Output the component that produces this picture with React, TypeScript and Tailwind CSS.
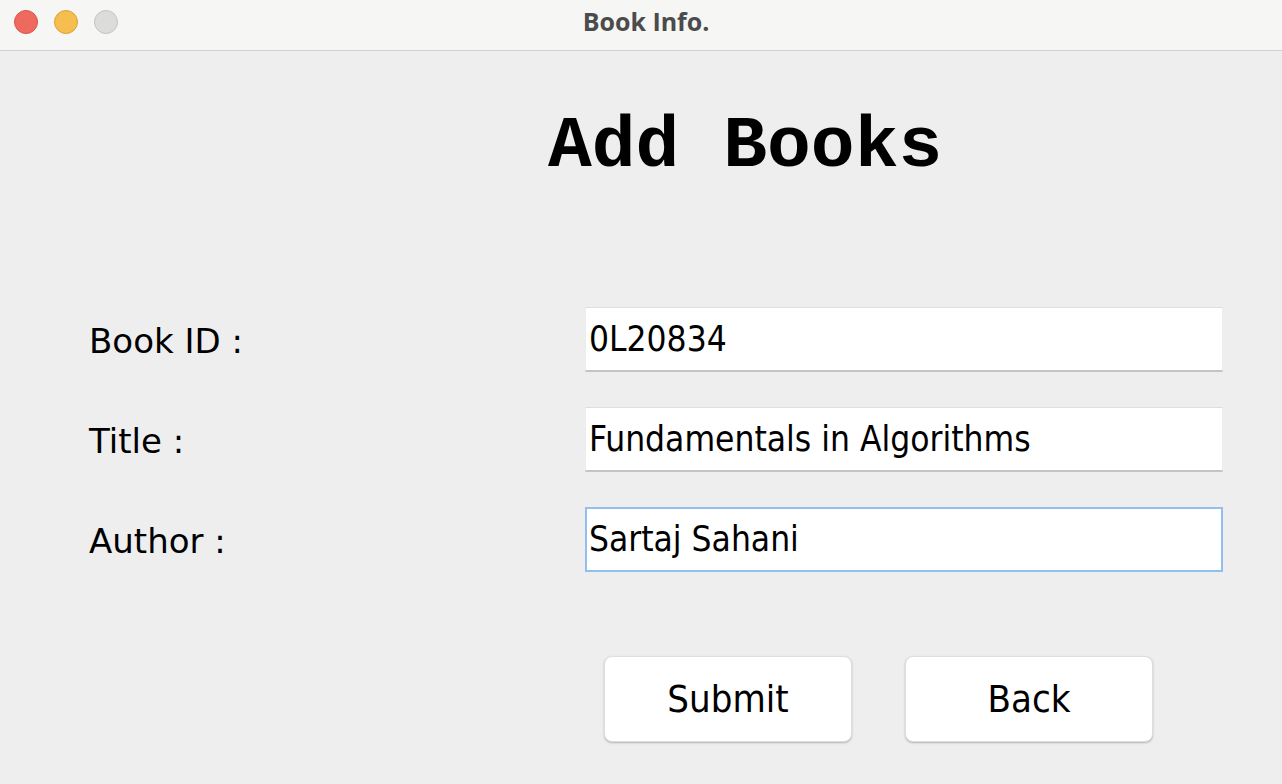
import React from 'react';

const fieldFont = { fontFamily: '"DejaVu Sans Condensed", "DejaVu Sans", Tahoma, sans-serif' };
const labelFont = { fontFamily: '"DejaVu Sans", Verdana, sans-serif' };

function TrafficLights() {
  return (
    <div className="flex items-center gap-4 pl-[14px] pt-[10px]">
      <span className="w-6 h-6 rounded-full bg-[#ee6a5f] border border-[#d8544a]" />
      <span className="w-6 h-6 rounded-full bg-[#f5be4f] border border-[#d9a23a]" />
      <span className="w-6 h-6 rounded-full bg-[#dcdcdb] border border-[#c4c4c3]" />
    </div>
  );
}

function Field({ label, value, focused }: { label: string; value: string; focused?: boolean }) {
  return (
    <div className="flex items-center h-[65px]">
      <div className="w-[585px] pl-[89px] pt-[3px] text-[34px] text-black" style={labelFont}>
        {label}
      </div>
      <div
        className={
          focused
            ? 'w-[638px] h-[65px] bg-white border-2 border-[#92bff2] flex items-center pl-[2px] text-[35px] text-black'
            : 'w-[638px] h-[65px] bg-white border-t border-t-[#dedede] border-b-2 border-b-[#c4c4c4] border-x border-x-[#ececec] flex items-center pl-[3px] text-[35px] text-black'
        }
        style={fieldFont}
      >
        {value}
      </div>
    </div>
  );
}

export default function App() {
  return (
    <div className="w-[1282px] h-[784px] bg-[#eeeeee] flex flex-col overflow-hidden">
      {/* title bar */}
      <div className="relative h-[51px] bg-[#f6f6f4] border-b border-[#d0d0d0] flex items-start">
        <TrafficLights />
        <div
          className="absolute left-[10px] right-0 top-0 h-[43px] flex items-center justify-center text-[25px] font-bold text-[#4b4b4b]"
          style={{ fontFamily: '"Open Sans", "Noto Sans", sans-serif' }}
        >
          Book Info.
        </div>
      </div>

      {/* heading */}
      <div className="pt-[59px] pl-[548px] h-[256px]">
        <h1
          className="text-[73px] leading-none font-bold text-black"
          style={{ fontFamily: '"Liberation Mono", "Courier New", monospace' }}
        >
          Add Books
        </h1>
      </div>

      {/* form */}
      <div className="flex flex-col gap-[35px]">
        <Field label="Book ID :" value="0L20834" />
        <Field label="Title :" value="Fundamentals in Algorithms" />
        <Field label="Author :" value="Sartaj Sahani" focused />
      </div>

      {/* buttons */}
      <div className="flex gap-[53px] pl-[604px] pt-[84px]">
        <button
          className="w-[248px] h-[86px] bg-white rounded-[8px] shadow-[0_1px_2px_rgba(0,0,0,0.25)] border border-[#dedede] text-[38px] text-black"
          style={fieldFont}
        >
          Submit
        </button>
        <button
          className="w-[248px] h-[86px] bg-white rounded-[8px] shadow-[0_1px_2px_rgba(0,0,0,0.25)] border border-[#dedede] text-[38px] text-black"
          style={fieldFont}
        >
          Back
        </button>
      </div>
    </div>
  );
}
